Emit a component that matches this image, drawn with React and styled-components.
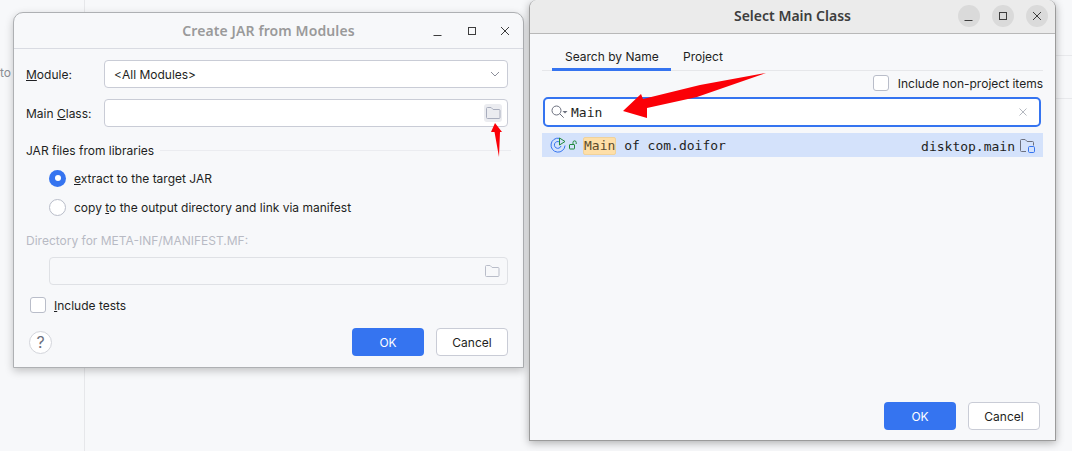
import React from "react";
import styled, { createGlobalStyle } from "styled-components";

const GlobalStyle = createGlobalStyle`
    html, body {
        margin: 0;
        padding: 0;
        width: 1072px;
        height: 451px;
        overflow: hidden;
        background: #f7f8fa;
        font-family: Inter, "Liberation Sans", sans-serif;
        font-size: 12px;
        color: #1e1f22;
    }
`;

const FolderIcon = ({ color = "#a8adbd" }) => (
    <svg width="16" height="16" viewBox="0 0 16 16" fill="none">
        <path d="M1.5 3.5a1 1 0 0 1 1-1h3.600l2 2h5.900a1 1 0 0 1 1 1v7a1 1 0 0 1-1 1h-11.500a1 1 0 0 1-1-1z" stroke={color} />
    </svg>
);

const Chevron = () => (
    <svg width="12" height="12" viewBox="0 0 12 12" fill="none">
        <path d="M2 4l4 4 4-4" stroke="#8c8f9a" strokeWidth="1" />
    </svg>
);

const SearchIcon = () => (
    <svg width="18" height="16" viewBox="0 0 18 16" fill="none">
        <circle cx="5.500" cy="6.500" r="4.500" stroke="#6c707e" />
        <path d="M8.700 9.700l4 4" stroke="#6c707e" />
        <path d="M11.500 7h5l-2.500 2.500z" fill="#6c707e" />
    </svg>
);

const RunClassIcon = () => (
    <svg width="16" height="16" viewBox="0 0 16 16" fill="none">
        <path d="M9.500 1.300A7 7 0 1 0 15 8.500" stroke="#3574f0" />
        <path d="M10.700 6.200A3.400 3.400 0 1 0 11 9" stroke="#3574f0" />
        <path d="M9.500 1v7l5.500-3.500z" fill="#d3e0fb" stroke="#208a3c" />
    </svg>
);

const LockIcon = () => (
    <svg width="10" height="10" viewBox="0 0 10 10" fill="none">
        <rect x="0.500" y="4.500" width="5" height="4.500" rx="0.500" stroke="#208a3c" />
        <path d="M4 4.500V2.500a1.600 1.600 0 0 1 3.200 0V4" stroke="#208a3c" />
    </svg>
);

const ModuleFolderIcon = () => (
    <svg width="17" height="17" viewBox="0 0 17 17" fill="none">
        <path d="M7 14.500H2.500a1 1 0 0 1-1-1v-10a1 1 0 0 1 1-1h3.600l2 2h5.400a1 1 0 0 1 1 1v3" stroke="#6c707e" />
        <rect x="9.500" y="9.500" width="6" height="6" rx="1.200" stroke="#3574f0" />
    </svg>
);

const ClearIcon = () => (
    <svg width="10" height="10" viewBox="0 0 10 10" fill="none">
        <path d="M1.500 1.500l7 7M8.500 1.500l-7 7" stroke="#b4b8bf" />
    </svg>
);

const WinGlyph = ({ kind, color = "#3d3d3d" }) => (
    <svg width="12" height="12" viewBox="0 0 12 12" fill="none">
        {kind === "min" && <path d="M1.500 10.500h8" stroke={color} />}
        {kind === "max" && <rect x="2.500" y="2.500" width="7" height="7" stroke={color} />}
        {kind === "close" && <path d="M2 2l8 8M10 2l-8 8" stroke={color} />}
    </svg>
);

const App = () => {
    return (
        <>
            <GlobalStyle />
            <Backdrop>
                <SideColumn><CutText>to</CutText></SideColumn>
                <RightGutter />
            </Backdrop>

            <JarWindow>
                <TitleBar>
                    <JarTitle>Create JAR from Modules</JarTitle>
                    <FlatControls>
                        <FlatButton><WinGlyph kind="min" /></FlatButton>
                        <FlatButton><WinGlyph kind="max" /></FlatButton>
                        <FlatButton><WinGlyph kind="close" /></FlatButton>
                    </FlatControls>
                </TitleBar>
                <JarBody>
                    <FormRow>
                        <FieldLabel><u>M</u>odule:</FieldLabel>
                        <Field>
                            <span>&lt;All Modules&gt;</span>
                            <Chevron />
                        </Field>
                    </FormRow>
                    <FormRow>
                        <FieldLabel>Main <u>C</u>lass:</FieldLabel>
                        <Field>
                            <span />
                            <IconHover><FolderIcon /></IconHover>
                        </Field>
                    </FormRow>
                    <GroupHeading>
                        <span>JAR files from libraries</span>
                        <GroupLine />
                    </GroupHeading>
                    <RadioRow>
                        <Radio $checked />
                        <span><u>e</u>xtract to the target JAR</span>
                    </RadioRow>
                    <RadioRow>
                        <Radio />
                        <span>copy <u>t</u>o the output directory and link via manifest</span>
                    </RadioRow>
                    <DisabledLabel>Directory for META-INF/MANIFEST.MF:</DisabledLabel>
                    <DisabledField><FolderIcon color="#b9bdc9" /></DisabledField>
                    <CheckRow>
                        <Checkbox />
                        <span><u>I</u>nclude tests</span>
                    </CheckRow>
                    <JarFooter>
                        <HelpButton>?</HelpButton>
                        <FooterButtons>
                            <PrimaryButton>OK</PrimaryButton>
                            <SecondaryButton>Cancel</SecondaryButton>
                        </FooterButtons>
                    </JarFooter>
                </JarBody>
            </JarWindow>

            <ClassWindow>
                <GnomeBar>
                    <ClassTitle>Select Main Class</ClassTitle>
                    <RoundControls>
                        <RoundButton><WinGlyph kind="min" /></RoundButton>
                        <RoundButton><WinGlyph kind="max" /></RoundButton>
                        <RoundButton><WinGlyph kind="close" /></RoundButton>
                    </RoundControls>
                </GnomeBar>
                <ClassBody>
                    <Tabs>
                        <Tab $active>Search by Name</Tab>
                        <Tab>Project</Tab>
                    </Tabs>
                    <OptionRow>
                        <Checkbox />
                        <span>Include non-project items</span>
                    </OptionRow>
                    <SearchBox>
                        <SearchIcon />
                        <SearchText>Main</SearchText>
                        <ClearIcon />
                    </SearchBox>
                    <ResultRow>
                        <RunClassIcon />
                        <LockIcon />
                        <ResultText><Match>Main</Match> of com.doifor</ResultText>
                        <ResultModule>disktop.main</ResultModule>
                        <ModuleFolderIcon />
                    </ResultRow>
                    <ClassFooter>
                        <PrimaryButton>OK</PrimaryButton>
                        <SecondaryButton>Cancel</SecondaryButton>
                    </ClassFooter>
                </ClassBody>
            </ClassWindow>

            <SmallArrow width="16" height="38" viewBox="0 0 16 38">
                <path d="M7 2L14 11L12 11L11 36L6.500 11L3 11z" fill="#fb0007" />
            </SmallArrow>
            <BigArrow width="150" height="50" viewBox="0 0 150 50">
                <path d="M3 41L21 24L23 29L80 15L146 3L77 27L27 38L27 48z" fill="#fb0007" />
            </BigArrow>
        </>
    );
};

export default App;

const Backdrop = styled.div`
    display: flex;
    width: 1072px;
    height: 451px;
    background: #f7f8fa;
`;
const SideColumn = styled.div`
    width: 85px;
    height: 100%;
    border-right: 1px solid #e6e7ea;
    padding-top: 65px;
    box-sizing: border-box;
    overflow: hidden;
`;
const CutText = styled.span`
    color: #8c8f96;
`;
const RightGutter = styled.div`
    margin-left: auto;
    margin-top: 55px;
    width: 17px;
    height: 42px;
    border-top: 1px solid #e8e9ec;
    border-bottom: 1px solid #e8e9ec;
`;

const JarWindow = styled.div`
    position: absolute;
    left: 13px;
    top: 12px;
    width: 511px;
    height: 356px;
    box-sizing: border-box;
    display: flex;
    flex-direction: column;
    background: #f7f8fa;
    border: 1px solid #aeb0b3;
    border-radius: 10px 10px 0 0;
    box-shadow: 0 3px 8px rgba(0, 0, 0, 0.22);
`;
const TitleBar = styled.div`
    position: relative;
    flex: 0 0 35px;
    display: flex;
    align-items: center;
    justify-content: center;
    border-bottom: 1px solid #d9dbe2;
    border-radius: 10px 10px 0 0;
`;
const JarTitle = styled.div`
    font-family: "Noto Sans", sans-serif;
    font-weight: 600;
    font-size: 14px;
    color: #9a9a9a;
    letter-spacing: 0.1px;
`;
const FlatControls = styled.div`
    position: absolute;
    right: 1px;
    top: 0;
    height: 100%;
    display: flex;
    align-items: center;
`;
const FlatButton = styled.div`
    width: 33.5px;
    display: flex;
    justify-content: center;
`;
const JarBody = styled.div`
    flex: 1;
    display: flex;
    flex-direction: column;
    padding: 11px 15px 0 12px;
`;
const FormRow = styled.div`
    display: flex;
    align-items: center;
    margin-bottom: 11px;
`;
const FieldLabel = styled.div`
    width: 78px;
`;
const Field = styled.div`
    flex: 1;
    height: 28px;
    box-sizing: border-box;
    display: flex;
    align-items: center;
    justify-content: space-between;
    padding: 0 6px 0 9px;
    background: #fff;
    border: 1px solid #c9ccd6;
    border-radius: 4px;
`;
const IconHover = styled.div`
    width: 18px;
    height: 18px;
    display: flex;
    align-items: center;
    justify-content: center;
    margin-right: -1px;
    background: #ebecf0;
    border-radius: 3px;
`;
const GroupHeading = styled.div`
    display: flex;
    align-items: center;
    gap: 6px;
    height: 16px;
    margin-top: 4px;
    margin-bottom: 12px;
    margin-right: -3px;
`;
const GroupLine = styled.div`
    flex: 1;
    height: 1px;
    background: #ebecf0;
`;
const RadioRow = styled.div`
    display: flex;
    align-items: center;
    gap: 8px;
    height: 16px;
    margin-left: 23px;
    margin-bottom: 13px;
`;
const Radio = styled.div`
    width: 17px;
    height: 17px;
    box-sizing: border-box;
    flex: none;
    border-radius: 50%;
    background: ${(p) => (p.$checked ? "#3574f0" : "#fff")};
    border: ${(p) => (p.$checked ? "none" : "1px solid #b9bdc9")};
    display: flex;
    align-items: center;
    justify-content: center;
    &::after {
        content: "";
        display: ${(p) => (p.$checked ? "block" : "none")};
        width: 6px;
        height: 6px;
        border-radius: 50%;
        background: #fff;
    }
`;
const DisabledLabel = styled.div`
    color: #b8bac4;
    margin-top: 5px;
    height: 16px;
`;
const DisabledField = styled.div`
    height: 28px;
    box-sizing: border-box;
    margin-top: 8px;
    margin-left: 23px;
    padding-right: 7px;
    display: flex;
    align-items: center;
    justify-content: flex-end;
    border: 1px solid #dfe1e5;
    border-radius: 4px;
`;
const CheckRow = styled.div`
    display: flex;
    align-items: center;
    gap: 8px;
    height: 16px;
    margin-top: 12px;
    margin-left: 4px;
`;
const Checkbox = styled.div`
    width: 16px;
    height: 16px;
    box-sizing: border-box;
    flex: none;
    background: #fff;
    border: 1px solid #b9bdc9;
    border-radius: 3px;
`;
const JarFooter = styled.div`
    display: flex;
    align-items: center;
    justify-content: space-between;
    margin-top: 15px;
    margin-left: 3px;
`;
const HelpButton = styled.div`
    width: 23px;
    height: 23px;
    box-sizing: border-box;
    border: 1px solid #d3d5db;
    border-radius: 50%;
    background: #fff;
    color: #6c707e;
    font-size: 16px;
    display: flex;
    align-items: center;
    justify-content: center;
`;
const FooterButtons = styled.div`
    display: flex;
    gap: 12px;
`;
const PrimaryButton = styled.div`
    width: 72px;
    height: 28px;
    box-sizing: border-box;
    display: flex;
    align-items: center;
    justify-content: center;
    background: #3574f0;
    color: #fff;
    border-radius: 4px;
`;
const SecondaryButton = styled(PrimaryButton)`
    background: #fff;
    color: #1e1f22;
    border: 1px solid #c9ccd6;
`;

const ClassWindow = styled.div`
    position: absolute;
    left: 529px;
    top: 0;
    width: 527px;
    height: 441px;
    box-sizing: border-box;
    display: flex;
    flex-direction: column;
    background: #f7f8fa;
    border: 1px solid #9b9b9b;
    border-top: none;
    border-radius: 8px 8px 0 0;
    box-shadow: 0 2px 8px rgba(0, 0, 0, 0.3);
`;
const GnomeBar = styled.div`
    position: relative;
    flex: 0 0 31px;
    padding-bottom: 2px;
    display: flex;
    align-items: center;
    justify-content: center;
    background: #ebebeb;
    border-bottom: 1px solid #b8b8b8;
    border-radius: 8px 8px 0 0;
`;
const ClassTitle = styled.div`
    font-family: "Noto Sans", sans-serif;
    font-weight: 600;
    font-size: 14px;
    color: #3d3d3d;
`;
const RoundControls = styled.div`
    position: absolute;
    right: 7px;
    top: 5px;
    display: flex;
    gap: 12px;
`;
const RoundButton = styled.div`
    width: 22px;
    height: 22px;
    border-radius: 50%;
    background: #dadada;
    display: flex;
    align-items: center;
    justify-content: center;
`;
const ClassBody = styled.div`
    flex: 1;
    display: flex;
    flex-direction: column;
    padding: 0 12px;
`;
const Tabs = styled.div`
    display: flex;
    height: 37px;
    padding-left: 10px;
    border-bottom: 1px solid #e6e7ea;
    box-sizing: border-box;
`;
const Tab = styled.div`
    height: 37px;
    flex: none;
    white-space: nowrap;
    box-sizing: border-box;
    padding: 15px 12px 0 ${(p) => (p.$active ? "13px" : "12px")};
    ${(p) => p.$active && "border-bottom: 3px solid #3574f0; width: 119px;"}
`;
const OptionRow = styled.div`
    display: flex;
    align-items: center;
    justify-content: flex-end;
    gap: 9px;
    height: 16px;
    margin-top: 4px;
`;
const SearchBox = styled.div`
    height: 30px;
    box-sizing: border-box;
    margin-top: 6px;
    margin-left: 1px;
    margin-right: 2px;
    padding: 0 11px 0 6px;
    display: flex;
    align-items: center;
    background: #fff;
    border: 2px solid #3574f0;
    border-radius: 5px;
`;
const SearchText = styled.div`
    flex: 1;
    font-family: "DejaVu Sans Mono", monospace;
    font-size: 13px;
    margin-left: 2px;
`;
const ResultRow = styled.div`
    height: 24px;
    margin-top: 6px;
    padding: 0 7px 0 8px;
    display: flex;
    align-items: center;
    gap: 3px;
    background: #d4e2fb;
    font-family: "DejaVu Sans Mono", monospace;
    font-size: 13px;
`;
const ResultText = styled.div`
    flex: 1;
    margin-left: 1px;
    padding-top: 2px;
`;
const Match = styled.span`
    display: inline-block;
    background: #fedfa8;
    border: 1px solid #f0d29b;
    border-radius: 2px;
    color: #5a4a2c;
    line-height: 16px;
`;
const ResultModule = styled.div`
    margin-right: 1px;
    padding-top: 2px;
`;
const ClassFooter = styled.div`
    margin-top: auto;
    margin-bottom: 10px;
    margin-right: 3px;
    display: flex;
    justify-content: flex-end;
    gap: 12px;
`;

const SmallArrow = styled.svg`
    position: absolute;
    left: 488px;
    top: 121px;
`;
const BigArrow = styled.svg`
    position: absolute;
    left: 620px;
    top: 70px;
`;
